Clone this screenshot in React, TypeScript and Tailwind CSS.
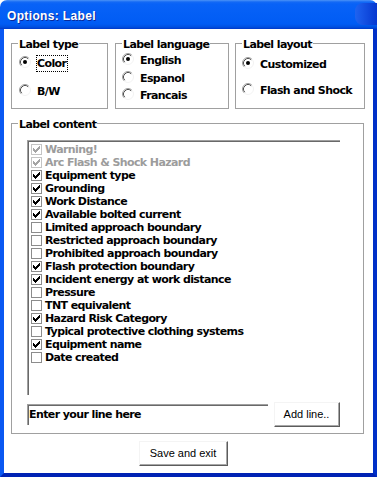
import React from "react";

const CHECK = [
  "......#",
  ".....##",
  "#...###",
  "##.###.",
  "#####..",
  ".###...",
  "..#....",
];

function CheckBox({ checked, disabled }: { checked: boolean; disabled?: boolean }) {
  const stroke = disabled ? "#c4c4c4" : "#8c8c8c";
  const fill = disabled ? "#a4a4a4" : "#000000";
  return (
    <svg width="11" height="11" viewBox="0 0 11 11" shapeRendering="crispEdges" className="shrink-0">
      <rect x="0.5" y="0.5" width="10" height="10" fill="#ffffff" stroke={stroke} />
      {checked &&
        CHECK.flatMap((row, y) =>
          row.split("").map((c, x) =>
            c === "#" ? <rect key={`${x}-${y}`} x={x + 2} y={y + 2} width="1" height="1" fill={fill} /> : null
          )
        )}
    </svg>
  );
}

function Radio({ checked }: { checked?: boolean }) {
  return (
    <svg width="12" height="12" viewBox="0 0 12 12" className="shrink-0 mb-[3px]">
      <path d="M2.11 9.89 A5.5 5.5 0 0 1 9.89 2.11" fill="none" stroke="#a0a0a0" />
      <path d="M2.82 9.18 A4.5 4.5 0 0 1 9.18 2.82" fill="none" stroke="#505050" />
      <path d="M2.11 9.89 A5.5 5.5 0 0 0 9.89 2.11" fill="none" stroke="#f2f2f2" />
      {checked && <circle cx="6" cy="6" r="2" fill="#000000" />}
    </svg>
  );
}

function RadioRow({ label, checked, focus }: { label: string; checked?: boolean; focus?: boolean }) {
  return (
    <div className="flex items-center h-[17px]">
      <Radio checked={checked} />
      <span
        className={`ml-[5px] h-[17px] leading-[15px] pr-[1px] border border-dotted ${
          focus ? "border-black" : "border-transparent"
        }`}
      >
        {label}
      </span>
    </div>
  );
}

function Legend({ children }: { children: React.ReactNode }) {
  return (
    <legend className="ml-[6px] px-[1px] pt-[3px] leading-[13px] font-bold text-[11px] tracking-[-0.6px] text-black">
      {children}
    </legend>
  );
}

function Button({ label, w }: { label: string; w: string }) {
  return (
    <div className={`${w} h-[25px] bg-white border-r border-b border-[#5c5c5c] border-t border-l border-t-[#f4f4f4] border-l-[#f4f4f4] shrink-0`}>
      <div className="h-full border-r border-b border-[#a8a8a8] flex items-center justify-center font-['Liberation_Sans',sans-serif] font-normal tracking-normal text-[11px] text-black">
        {label}
      </div>
    </div>
  );
}

const ITEMS: { label: string; checked: boolean; disabled?: boolean }[] = [
  { label: "Warning!", checked: true, disabled: true },
  { label: "Arc Flash & Shock Hazard", checked: true, disabled: true },
  { label: "Equipment type", checked: true },
  { label: "Grounding", checked: true },
  { label: "Work Distance", checked: true },
  { label: "Available bolted current", checked: true },
  { label: "Limited approach boundary", checked: false },
  { label: "Restricted approach boundary", checked: false },
  { label: "Prohibited approach boundary", checked: false },
  { label: "Flash protection boundary", checked: true },
  { label: "Incident energy at work distance", checked: true },
  { label: "Pressure", checked: false },
  { label: "TNT equivalent", checked: false },
  { label: "Hazard Risk Category", checked: true },
  { label: "Typical protective clothing systems", checked: false },
  { label: "Equipment name", checked: true },
  { label: "Date created", checked: false },
];

export default function App() {
  return (
    <div className="w-[377px] h-[477px] flex flex-col bg-white font-['DejaVu_Sans',sans-serif] text-black">
      <div className="h-[29px] shrink-0 rounded-t-[7px] bg-[linear-gradient(180deg,#4b93f7_0px,#1369f5_2px,#0862f7_4px,#005cf4_24px,#0050e0_27px,#0038c8_29px)] flex items-center pl-[7px]">
        <span className="mt-[3px] text-white font-['Liberation_Sans',sans-serif] font-bold text-[12px] tracking-[0.35px] leading-none [text-shadow:1px_1px_0_#0b2a9a]">
          Options: Label
        </span>
        <div className="ml-auto mb-[2px] w-[22px] h-[22px] rounded-l-[8px] bg-[linear-gradient(90deg,#1f63f0,#0638d0)]" />
      </div>
      <div className="flex-1 flex flex-col bg-white border-l-4 border-r-4 border-b-4 border-l-[#0a58f2] border-r-[#0030c8] border-b-[#0022b4]">
        <div className="flex mt-[6px] ml-[7px] font-bold text-[11px] tracking-[-0.6px]">
          <fieldset className="w-[97px] h-[74px] min-w-0 border border-[#a0a0a0]">
            <Legend>Label type</Legend>
            <div className="flex flex-col pl-[7px] pt-[4px] gap-[11px]">
              <RadioRow label="Color" checked focus />
              <RadioRow label="B/W" />
            </div>
          </fieldset>
          <fieldset className="ml-[7px] w-[114px] h-[74px] min-w-0 border border-[#a0a0a0]">
            <Legend>Label language</Legend>
            <div className="flex flex-col pl-[6px] pt-[1px]">
              <div className="mb-[1px]">
                <RadioRow label="English" checked />
              </div>
              <RadioRow label="Espanol" />
              <RadioRow label="Francais" />
            </div>
          </fieldset>
          <fieldset className="ml-[6px] w-[130px] h-[74px] min-w-0 border border-[#a0a0a0]">
            <Legend>Label layout</Legend>
            <div className="flex flex-col pl-[6px] pt-[5px] gap-[9px]">
              <RadioRow label="Customized" checked />
              <RadioRow label="Flash and Shock" />
            </div>
          </fieldset>
        </div>

        <fieldset className="mt-[6px] ml-[7px] w-[353px] h-[319px] min-w-0 border border-[#a0a0a0]">
          <Legend>Label content</Legend>
          <div className="pl-[15px] pt-[9px] font-bold text-[11px] tracking-[-0.6px]">
            <div className="w-[313px] h-[255px] border-t border-l border-[#a0a0a0]">
              <div className="h-full border-t border-l border-[#696969] pt-[1px] pl-[2px] flex flex-col">
                {ITEMS.map((it) => (
                  <div key={it.label} className="h-[13px] flex items-center gap-[3px]">
                    <CheckBox checked={it.checked} disabled={it.disabled} />
                    <span className={`leading-[13px] whitespace-nowrap ${it.disabled ? "text-[#9c9c9c]" : "text-black"}`}>
                      {it.label}
                    </span>
                  </div>
                ))}
              </div>
            </div>
            <div className="mt-[7px] h-[25px] flex items-center">
              <div className="w-[241px] h-[21px] border-t border-l border-[#a0a0a0]">
                <div className="h-full border-t border-l border-[#696969] flex items-center whitespace-nowrap">
                  Enter your line here
                </div>
              </div>
              <div className="ml-[6px]">
                <Button label="Add line.." w="w-[66px]" />
              </div>
            </div>
          </div>
        </fieldset>

        <div className="mt-[7px] ml-[135px]">
          <Button label="Save and exit" w="w-[89px]" />
        </div>
      </div>
    </div>
  );
}
